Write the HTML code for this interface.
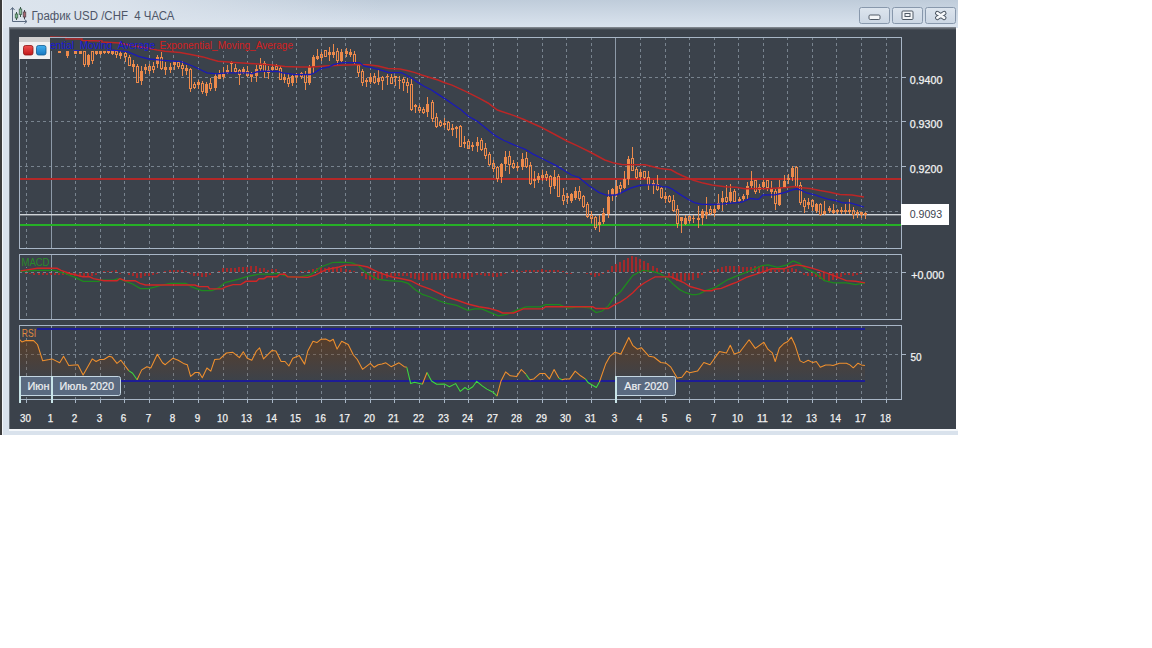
<!DOCTYPE html><html><head><meta charset="utf-8"><style>html,body{margin:0;padding:0;background:#fff;width:1152px;height:648px;overflow:hidden}svg{display:block}text{font-family:"Liberation Sans",sans-serif}</style></head><body>
<svg width="1152" height="648" viewBox="0 0 1152 648">
<defs>
<linearGradient id="tb" x1="0" y1="0" x2="0" y2="1"><stop offset="0" stop-color="#bfccda"/><stop offset="1" stop-color="#dbe4ef"/></linearGradient>
<linearGradient id="tbl" x1="0" y1="0" x2="1" y2="0"><stop offset="0" stop-color="#dce4ed" stop-opacity="1"/><stop offset="0.12" stop-color="#dce4ed" stop-opacity="0.9"/><stop offset="0.4" stop-color="#dce4ed" stop-opacity="0"/></linearGradient>
<linearGradient id="btn" x1="0" y1="0" x2="0" y2="1"><stop offset="0" stop-color="#dde5ee"/><stop offset="1" stop-color="#cbd6e3"/></linearGradient>
<linearGradient id="rsif" gradientUnits="userSpaceOnUse" x1="0" y1="336" x2="0" y2="382"><stop offset="0" stop-color="#6a3a12" stop-opacity="0.6"/><stop offset="1" stop-color="#7a3e10" stop-opacity="0"/></linearGradient>
<linearGradient id="red3d" x1="0" y1="0" x2="0" y2="1"><stop offset="0" stop-color="#f05050"/><stop offset="1" stop-color="#c01818"/></linearGradient>
<linearGradient id="blue3d" x1="0" y1="0" x2="0" y2="1"><stop offset="0" stop-color="#40b0f0"/><stop offset="1" stop-color="#1878c0"/></linearGradient>
<linearGradient id="shd" x1="0" y1="0" x2="0" y2="1"><stop offset="0" stop-color="#8c939a"/><stop offset="0.4" stop-color="#6a7078"/><stop offset="1" stop-color="#3b424b"/></linearGradient>
<clipPath id="cmain"><rect x="20" y="36" width="881" height="212"/></clipPath>
<clipPath id="cmacd"><rect x="20" y="255" width="881" height="64"/></clipPath>
<clipPath id="crsi"><rect x="20" y="326" width="881" height="73"/></clipPath>
</defs>
<rect x="0" y="0" width="958" height="435" fill="#d9e2ec"/>
<rect x="956" y="28" width="2" height="401" fill="#ffffff"/>
<rect x="0" y="0" width="958" height="28" fill="url(#tb)"/>
<rect x="0" y="0" width="958" height="28" fill="url(#tbl)"/>
<rect x="0" y="0" width="2" height="435" fill="#3c3c3c"/>
<rect x="2" y="0" width="1" height="435" fill="#f2f6fa"/>
<rect x="9" y="28" width="947" height="401" fill="#3b424b"/>
<rect x="9" y="27" width="947" height="3" fill="url(#shd)"/>
<rect x="9" y="28" width="1" height="401" fill="#6c737b"/>
<rect x="9" y="429" width="949" height="2" fill="#f4f7fa"/>
<g fill="none" stroke="#5a6a80" stroke-width="1">
<path d="M12.5 8 V21.5 H26.5"/><path d="M10.5 10 L12.5 7.5 L14.5 10"/><path d="M24.5 19.5 L27 21.5 L24.5 23.5"/>
</g>
<rect x="16" y="12" width="1" height="8" fill="#3a5a48"/><rect x="15.2" y="14" width="2.6" height="4" fill="#7ab48a" stroke="#3a5a48" stroke-width="0.7"/>
<rect x="20" y="7" width="1" height="10" fill="#3a5a48"/><rect x="19.2" y="9" width="2.6" height="5.5" fill="#8ac09a" stroke="#3a5a48" stroke-width="0.7"/>
<rect x="24" y="10" width="1" height="9" fill="#4a4048"/><rect x="23.2" y="12" width="2.6" height="5" fill="#a86870" stroke="#4a4048" stroke-width="0.7"/>
<text x="31.5" y="19.8" font-size="12" fill="#4e5668" textLength="143" lengthAdjust="spacingAndGlyphs">График USD /CHF &#160;4 ЧАСА</text>
<rect x="859.5" y="7.5" width="30" height="16" rx="2" fill="url(#btn)" stroke="#8898ac" stroke-width="1"/>
<rect x="892.5" y="7.5" width="30" height="16" rx="2" fill="url(#btn)" stroke="#8898ac" stroke-width="1"/>
<rect x="925.5" y="7.5" width="30" height="16" rx="2" fill="url(#btn)" stroke="#8898ac" stroke-width="1"/>
<rect x="869" y="15" width="11" height="4.5" rx="1.2" fill="#f4f6f8" stroke="#505a66" stroke-width="1"/>
<rect x="902" y="11" width="11" height="8.5" rx="1" fill="#f4f6f8" stroke="#505a66" stroke-width="1"/><rect x="905" y="13.5" width="5" height="3" fill="none" stroke="#505a66" stroke-width="1"/>
<path d="M937.3 13.2 L944.2 17.8 M944.2 13.2 L937.3 17.8" stroke="#4a5460" stroke-width="4.6" stroke-linecap="round"/><path d="M937.3 13.2 L944.2 17.8 M944.2 13.2 L937.3 17.8" stroke="#f6f8fa" stroke-width="2.6" stroke-linecap="round"/>
<g stroke="#78838e" stroke-width="1" stroke-dasharray="3 3" shape-rendering="crispEdges">
<line x1="26.5" y1="38" x2="26.5" y2="248" stroke-dashoffset="1"/><line x1="75.5" y1="38" x2="75.5" y2="248" stroke-dashoffset="1"/><line x1="100.5" y1="38" x2="100.5" y2="248" stroke-dashoffset="1"/><line x1="124.5" y1="38" x2="124.5" y2="248" stroke-dashoffset="1"/><line x1="149.5" y1="38" x2="149.5" y2="248" stroke-dashoffset="1"/><line x1="173.5" y1="38" x2="173.5" y2="248" stroke-dashoffset="1"/><line x1="198.5" y1="38" x2="198.5" y2="248" stroke-dashoffset="1"/><line x1="223.5" y1="38" x2="223.5" y2="248" stroke-dashoffset="1"/><line x1="247.5" y1="38" x2="247.5" y2="248" stroke-dashoffset="1"/><line x1="272.5" y1="38" x2="272.5" y2="248" stroke-dashoffset="1"/><line x1="296.5" y1="38" x2="296.5" y2="248" stroke-dashoffset="1"/><line x1="321.5" y1="38" x2="321.5" y2="248" stroke-dashoffset="1"/><line x1="345.5" y1="38" x2="345.5" y2="248" stroke-dashoffset="1"/><line x1="370.5" y1="38" x2="370.5" y2="248" stroke-dashoffset="1"/><line x1="394.5" y1="38" x2="394.5" y2="248" stroke-dashoffset="1"/><line x1="419.5" y1="38" x2="419.5" y2="248" stroke-dashoffset="1"/><line x1="444.5" y1="38" x2="444.5" y2="248" stroke-dashoffset="1"/><line x1="468.5" y1="38" x2="468.5" y2="248" stroke-dashoffset="1"/><line x1="493.5" y1="38" x2="493.5" y2="248" stroke-dashoffset="1"/><line x1="517.5" y1="38" x2="517.5" y2="248" stroke-dashoffset="1"/><line x1="542.5" y1="38" x2="542.5" y2="248" stroke-dashoffset="1"/><line x1="566.5" y1="38" x2="566.5" y2="248" stroke-dashoffset="1"/><line x1="591.5" y1="38" x2="591.5" y2="248" stroke-dashoffset="1"/><line x1="640.5" y1="38" x2="640.5" y2="248" stroke-dashoffset="1"/><line x1="665.5" y1="38" x2="665.5" y2="248" stroke-dashoffset="1"/><line x1="689.5" y1="38" x2="689.5" y2="248" stroke-dashoffset="1"/><line x1="714.5" y1="38" x2="714.5" y2="248" stroke-dashoffset="1"/><line x1="738.5" y1="38" x2="738.5" y2="248" stroke-dashoffset="1"/><line x1="763.5" y1="38" x2="763.5" y2="248" stroke-dashoffset="1"/><line x1="787.5" y1="38" x2="787.5" y2="248" stroke-dashoffset="1"/><line x1="812.5" y1="38" x2="812.5" y2="248" stroke-dashoffset="1"/><line x1="836.5" y1="38" x2="836.5" y2="248" stroke-dashoffset="1"/><line x1="861.5" y1="38" x2="861.5" y2="248" stroke-dashoffset="1"/><line x1="886.5" y1="38" x2="886.5" y2="248" stroke-dashoffset="1"/>
<line x1="20" y1="77.5" x2="901" y2="77.5" stroke-dashoffset="1"/>
<line x1="20" y1="121.5" x2="901" y2="121.5" stroke-dashoffset="1"/>
<line x1="20" y1="166.5" x2="901" y2="166.5" stroke-dashoffset="1"/>
<line x1="20" y1="211.5" x2="901" y2="211.5" stroke-dashoffset="1"/>
</g>
<g stroke="#8d9aa8" stroke-width="1" shape-rendering="crispEdges"><line x1="51.5" y1="37" x2="51.5" y2="248"/><line x1="615.5" y1="37" x2="615.5" y2="248"/></g>
<g stroke="#78838e" stroke-width="1" stroke-dasharray="3 3" shape-rendering="crispEdges">
<line x1="26.5" y1="255" x2="26.5" y2="319" stroke-dashoffset="2"/><line x1="75.5" y1="255" x2="75.5" y2="319" stroke-dashoffset="2"/><line x1="100.5" y1="255" x2="100.5" y2="319" stroke-dashoffset="2"/><line x1="124.5" y1="255" x2="124.5" y2="319" stroke-dashoffset="2"/><line x1="149.5" y1="255" x2="149.5" y2="319" stroke-dashoffset="2"/><line x1="173.5" y1="255" x2="173.5" y2="319" stroke-dashoffset="2"/><line x1="198.5" y1="255" x2="198.5" y2="319" stroke-dashoffset="2"/><line x1="223.5" y1="255" x2="223.5" y2="319" stroke-dashoffset="2"/><line x1="247.5" y1="255" x2="247.5" y2="319" stroke-dashoffset="2"/><line x1="272.5" y1="255" x2="272.5" y2="319" stroke-dashoffset="2"/><line x1="296.5" y1="255" x2="296.5" y2="319" stroke-dashoffset="2"/><line x1="321.5" y1="255" x2="321.5" y2="319" stroke-dashoffset="2"/><line x1="345.5" y1="255" x2="345.5" y2="319" stroke-dashoffset="2"/><line x1="370.5" y1="255" x2="370.5" y2="319" stroke-dashoffset="2"/><line x1="394.5" y1="255" x2="394.5" y2="319" stroke-dashoffset="2"/><line x1="419.5" y1="255" x2="419.5" y2="319" stroke-dashoffset="2"/><line x1="444.5" y1="255" x2="444.5" y2="319" stroke-dashoffset="2"/><line x1="468.5" y1="255" x2="468.5" y2="319" stroke-dashoffset="2"/><line x1="493.5" y1="255" x2="493.5" y2="319" stroke-dashoffset="2"/><line x1="517.5" y1="255" x2="517.5" y2="319" stroke-dashoffset="2"/><line x1="542.5" y1="255" x2="542.5" y2="319" stroke-dashoffset="2"/><line x1="566.5" y1="255" x2="566.5" y2="319" stroke-dashoffset="2"/><line x1="591.5" y1="255" x2="591.5" y2="319" stroke-dashoffset="2"/><line x1="640.5" y1="255" x2="640.5" y2="319" stroke-dashoffset="2"/><line x1="665.5" y1="255" x2="665.5" y2="319" stroke-dashoffset="2"/><line x1="689.5" y1="255" x2="689.5" y2="319" stroke-dashoffset="2"/><line x1="714.5" y1="255" x2="714.5" y2="319" stroke-dashoffset="2"/><line x1="738.5" y1="255" x2="738.5" y2="319" stroke-dashoffset="2"/><line x1="763.5" y1="255" x2="763.5" y2="319" stroke-dashoffset="2"/><line x1="787.5" y1="255" x2="787.5" y2="319" stroke-dashoffset="2"/><line x1="812.5" y1="255" x2="812.5" y2="319" stroke-dashoffset="2"/><line x1="836.5" y1="255" x2="836.5" y2="319" stroke-dashoffset="2"/><line x1="861.5" y1="255" x2="861.5" y2="319" stroke-dashoffset="2"/><line x1="886.5" y1="255" x2="886.5" y2="319" stroke-dashoffset="2"/>
<line x1="20" y1="272.5" x2="901" y2="272.5" stroke-dashoffset="1"/>
</g>
<g stroke="#8d9aa8" stroke-width="1" shape-rendering="crispEdges"><line x1="51.5" y1="254" x2="51.5" y2="319"/><line x1="615.5" y1="254" x2="615.5" y2="319"/></g>
<g stroke="#78838e" stroke-width="1" stroke-dasharray="3 3" shape-rendering="crispEdges">
<line x1="26.5" y1="326" x2="26.5" y2="399" stroke-dashoffset="1"/><line x1="75.5" y1="326" x2="75.5" y2="399" stroke-dashoffset="1"/><line x1="100.5" y1="326" x2="100.5" y2="399" stroke-dashoffset="1"/><line x1="124.5" y1="326" x2="124.5" y2="399" stroke-dashoffset="1"/><line x1="149.5" y1="326" x2="149.5" y2="399" stroke-dashoffset="1"/><line x1="173.5" y1="326" x2="173.5" y2="399" stroke-dashoffset="1"/><line x1="198.5" y1="326" x2="198.5" y2="399" stroke-dashoffset="1"/><line x1="223.5" y1="326" x2="223.5" y2="399" stroke-dashoffset="1"/><line x1="247.5" y1="326" x2="247.5" y2="399" stroke-dashoffset="1"/><line x1="272.5" y1="326" x2="272.5" y2="399" stroke-dashoffset="1"/><line x1="296.5" y1="326" x2="296.5" y2="399" stroke-dashoffset="1"/><line x1="321.5" y1="326" x2="321.5" y2="399" stroke-dashoffset="1"/><line x1="345.5" y1="326" x2="345.5" y2="399" stroke-dashoffset="1"/><line x1="370.5" y1="326" x2="370.5" y2="399" stroke-dashoffset="1"/><line x1="394.5" y1="326" x2="394.5" y2="399" stroke-dashoffset="1"/><line x1="419.5" y1="326" x2="419.5" y2="399" stroke-dashoffset="1"/><line x1="444.5" y1="326" x2="444.5" y2="399" stroke-dashoffset="1"/><line x1="468.5" y1="326" x2="468.5" y2="399" stroke-dashoffset="1"/><line x1="493.5" y1="326" x2="493.5" y2="399" stroke-dashoffset="1"/><line x1="517.5" y1="326" x2="517.5" y2="399" stroke-dashoffset="1"/><line x1="542.5" y1="326" x2="542.5" y2="399" stroke-dashoffset="1"/><line x1="566.5" y1="326" x2="566.5" y2="399" stroke-dashoffset="1"/><line x1="591.5" y1="326" x2="591.5" y2="399" stroke-dashoffset="1"/><line x1="640.5" y1="326" x2="640.5" y2="399" stroke-dashoffset="1"/><line x1="665.5" y1="326" x2="665.5" y2="399" stroke-dashoffset="1"/><line x1="689.5" y1="326" x2="689.5" y2="399" stroke-dashoffset="1"/><line x1="714.5" y1="326" x2="714.5" y2="399" stroke-dashoffset="1"/><line x1="738.5" y1="326" x2="738.5" y2="399" stroke-dashoffset="1"/><line x1="763.5" y1="326" x2="763.5" y2="399" stroke-dashoffset="1"/><line x1="787.5" y1="326" x2="787.5" y2="399" stroke-dashoffset="1"/><line x1="812.5" y1="326" x2="812.5" y2="399" stroke-dashoffset="1"/><line x1="836.5" y1="326" x2="836.5" y2="399" stroke-dashoffset="1"/><line x1="861.5" y1="326" x2="861.5" y2="399" stroke-dashoffset="1"/><line x1="886.5" y1="326" x2="886.5" y2="399" stroke-dashoffset="1"/>
<line x1="20" y1="354.5" x2="901" y2="354.5" stroke-dashoffset="1"/>
</g>
<g stroke="#8d9aa8" stroke-width="1" shape-rendering="crispEdges"><line x1="51.5" y1="325" x2="51.5" y2="399"/><line x1="615.5" y1="325" x2="615.5" y2="399"/></g>
<g stroke="#a8b6c6" stroke-width="1" shape-rendering="crispEdges">
<line x1="901" y1="77.5" x2="906" y2="77.5"/>
<line x1="901" y1="121.5" x2="906" y2="121.5"/>
<line x1="901" y1="166.5" x2="906" y2="166.5"/>
<line x1="901" y1="272.5" x2="906" y2="272.5"/><line x1="901" y1="354.5" x2="906" y2="354.5"/>
</g>
<g font-size="11" fill="#f2f2f2" stroke="#f2f2f2" stroke-width="0.25" lengthAdjust="spacingAndGlyphs">
<text x="909.7" y="83.8" textLength="32.7" lengthAdjust="spacingAndGlyphs">0.9400</text>
<text x="909.7" y="127.8" textLength="32.7" lengthAdjust="spacingAndGlyphs">0.9300</text>
<text x="909.7" y="172.8" textLength="32.7" lengthAdjust="spacingAndGlyphs">0.9200</text>
<text x="911.2" y="279" textLength="33" lengthAdjust="spacingAndGlyphs">+0.000</text><text x="910.4" y="361" textLength="11.1" lengthAdjust="spacingAndGlyphs">50</text>
</g>
<g clip-path="url(#cmain)">
<rect x="20" y="178" width="881" height="2" fill="#b42828"/>
<rect x="20" y="224" width="881" height="2" fill="#26b026"/>
<rect x="20" y="214" width="881" height="1.4" fill="#d0d4d8"/>
<g fill="#ec8a4c" shape-rendering="crispEdges">
<rect x="58" y="51" width="3" height="2"/>
<rect x="67" y="55" width="1" height="3"/>
<rect x="66" y="51" width="3" height="5"/>
<rect x="74" y="51" width="3" height="3"/>
<rect x="79" y="51" width="3" height="3"/>
<rect x="84" y="64" width="1" height="3"/>
<path d="M83 51h3v14h-3z M84 52h1v12h-1z" fill-rule="evenodd"/>
<rect x="88" y="54" width="1" height="1"/>
<rect x="88" y="64" width="1" height="3"/>
<rect x="87" y="55" width="3" height="10"/>
<rect x="92" y="60" width="1" height="4"/>
<path d="M91 51h3v10h-3z M92 52h1v8h-1z" fill-rule="evenodd"/>
<rect x="96" y="53" width="1" height="2"/>
<rect x="95" y="51" width="3" height="3"/>
<rect x="100" y="53" width="1" height="2"/>
<rect x="99" y="51" width="3" height="3"/>
<rect x="104" y="52" width="1" height="2"/>
<rect x="103" y="51" width="3" height="2"/>
<rect x="108" y="52" width="1" height="2"/>
<rect x="107" y="51" width="3" height="2"/>
<rect x="112" y="53" width="1" height="2"/>
<rect x="111" y="51" width="3" height="3"/>
<rect x="116" y="54" width="1" height="4"/>
<path d="M115 51h3v4h-3z M116 52h1v2h-1z" fill-rule="evenodd"/>
<rect x="120" y="51" width="1" height="2"/>
<rect x="120" y="55" width="1" height="4"/>
<rect x="119" y="53" width="3" height="3"/>
<rect x="125" y="52" width="1" height="1"/>
<rect x="125" y="56" width="1" height="6"/>
<path d="M124 53h3v4h-3z M125 54h1v2h-1z" fill-rule="evenodd"/>
<rect x="129" y="55" width="1" height="2"/>
<path d="M128 57h3v9h-3z M129 58h1v7h-1z" fill-rule="evenodd"/>
<rect x="133" y="60" width="1" height="4"/>
<rect x="133" y="66" width="1" height="6"/>
<rect x="132" y="64" width="3" height="3"/>
<rect x="137" y="64" width="1" height="2"/>
<path d="M136 66h3v17h-3z M137 67h1v15h-1z" fill-rule="evenodd"/>
<rect x="141" y="66" width="1" height="5"/>
<rect x="141" y="80" width="1" height="5"/>
<rect x="140" y="71" width="3" height="10"/>
<rect x="145" y="64" width="1" height="3"/>
<rect x="145" y="69" width="1" height="5"/>
<rect x="144" y="67" width="3" height="3"/>
<rect x="149" y="64" width="1" height="2"/>
<rect x="149" y="70" width="1" height="4"/>
<path d="M148 66h3v5h-3z M149 67h1v3h-1z" fill-rule="evenodd"/>
<rect x="153" y="62" width="1" height="4"/>
<rect x="153" y="69" width="1" height="4"/>
<path d="M152 66h3v4h-3z M153 67h1v2h-1z" fill-rule="evenodd"/>
<rect x="157" y="55" width="1" height="2"/>
<rect x="157" y="63" width="1" height="5"/>
<rect x="156" y="57" width="3" height="7"/>
<rect x="161" y="52" width="1" height="5"/>
<rect x="161" y="68" width="1" height="2"/>
<path d="M160 57h3v12h-3z M161 58h1v10h-1z" fill-rule="evenodd"/>
<rect x="165" y="62" width="1" height="5"/>
<rect x="165" y="69" width="1" height="6"/>
<rect x="164" y="67" width="3" height="3"/>
<rect x="170" y="63" width="1" height="4"/>
<rect x="170" y="69" width="1" height="4"/>
<rect x="169" y="67" width="3" height="3"/>
<rect x="174" y="64" width="1" height="6"/>
<rect x="173" y="62" width="3" height="3"/>
<rect x="178" y="66" width="1" height="3"/>
<path d="M177 62h3v5h-3z M178 63h1v3h-1z" fill-rule="evenodd"/>
<rect x="182" y="61" width="1" height="4"/>
<rect x="182" y="68" width="1" height="8"/>
<path d="M181 65h3v4h-3z M182 66h1v2h-1z" fill-rule="evenodd"/>
<rect x="186" y="65" width="1" height="3"/>
<rect x="186" y="70" width="1" height="5"/>
<rect x="185" y="68" width="3" height="3"/>
<rect x="190" y="68" width="1" height="1"/>
<rect x="190" y="88" width="1" height="4"/>
<path d="M189 69h3v20h-3z M190 70h1v18h-1z" fill-rule="evenodd"/>
<rect x="194" y="82" width="1" height="2"/>
<rect x="194" y="87" width="1" height="2"/>
<path d="M193 84h3v4h-3z M194 85h1v2h-1z" fill-rule="evenodd"/>
<rect x="198" y="80" width="1" height="2"/>
<rect x="198" y="84" width="1" height="5"/>
<rect x="197" y="82" width="3" height="3"/>
<rect x="202" y="81" width="1" height="2"/>
<rect x="202" y="91" width="1" height="3"/>
<path d="M201 83h3v9h-3z M202 84h1v7h-1z" fill-rule="evenodd"/>
<rect x="206" y="82" width="1" height="2"/>
<rect x="206" y="92" width="1" height="4"/>
<rect x="205" y="84" width="3" height="9"/>
<rect x="210" y="78" width="1" height="5"/>
<rect x="210" y="88" width="1" height="3"/>
<path d="M209 83h3v6h-3z M210 84h1v4h-1z" fill-rule="evenodd"/>
<rect x="215" y="74" width="1" height="2"/>
<rect x="215" y="87" width="1" height="4"/>
<rect x="214" y="76" width="3" height="12"/>
<rect x="219" y="70" width="1" height="4"/>
<rect x="218" y="74" width="3" height="5"/>
<rect x="223" y="67" width="1" height="7"/>
<rect x="223" y="76" width="1" height="3"/>
<rect x="222" y="74" width="3" height="3"/>
<rect x="227" y="65" width="1" height="5"/>
<rect x="227" y="72" width="1" height="2"/>
<rect x="226" y="70" width="3" height="3"/>
<rect x="231" y="61" width="1" height="1"/>
<rect x="231" y="63" width="1" height="9"/>
<rect x="230" y="62" width="3" height="2"/>
<rect x="235" y="64" width="1" height="4"/>
<rect x="235" y="71" width="1" height="2"/>
<path d="M234 68h3v4h-3z M235 69h1v2h-1z" fill-rule="evenodd"/>
<rect x="239" y="69" width="1" height="1"/>
<rect x="239" y="74" width="1" height="11"/>
<path d="M238 70h3v5h-3z M239 71h1v3h-1z" fill-rule="evenodd"/>
<rect x="243" y="67" width="1" height="2"/>
<rect x="243" y="72" width="1" height="2"/>
<rect x="242" y="69" width="3" height="4"/>
<rect x="247" y="66" width="1" height="5"/>
<rect x="247" y="75" width="1" height="2"/>
<path d="M246 71h3v5h-3z M247 72h1v3h-1z" fill-rule="evenodd"/>
<rect x="251" y="72" width="1" height="2"/>
<rect x="251" y="76" width="1" height="6"/>
<rect x="250" y="74" width="3" height="3"/>
<rect x="256" y="65" width="1" height="4"/>
<rect x="256" y="75" width="1" height="7"/>
<rect x="255" y="69" width="3" height="7"/>
<rect x="260" y="58" width="1" height="7"/>
<rect x="260" y="68" width="1" height="3"/>
<path d="M259 65h3v4h-3z M260 66h1v2h-1z" fill-rule="evenodd"/>
<rect x="264" y="61" width="1" height="2"/>
<rect x="264" y="71" width="1" height="7"/>
<path d="M263 63h3v9h-3z M264 64h1v7h-1z" fill-rule="evenodd"/>
<rect x="268" y="66" width="1" height="4"/>
<rect x="268" y="72" width="1" height="7"/>
<rect x="267" y="70" width="3" height="3"/>
<rect x="272" y="64" width="1" height="3"/>
<rect x="272" y="69" width="1" height="2"/>
<rect x="271" y="67" width="3" height="3"/>
<rect x="276" y="64" width="1" height="2"/>
<path d="M275 66h3v4h-3z M276 67h1v2h-1z" fill-rule="evenodd"/>
<rect x="280" y="66" width="1" height="2"/>
<path d="M279 68h3v12h-3z M280 69h1v10h-1z" fill-rule="evenodd"/>
<rect x="284" y="73" width="1" height="4"/>
<rect x="284" y="79" width="1" height="4"/>
<rect x="283" y="77" width="3" height="3"/>
<rect x="288" y="74" width="1" height="4"/>
<rect x="288" y="83" width="1" height="4"/>
<path d="M287 78h3v6h-3z M288 79h1v4h-1z" fill-rule="evenodd"/>
<rect x="292" y="74" width="1" height="2"/>
<rect x="292" y="82" width="1" height="4"/>
<rect x="291" y="76" width="3" height="7"/>
<rect x="296" y="73" width="1" height="2"/>
<rect x="296" y="76" width="1" height="7"/>
<rect x="295" y="75" width="3" height="2"/>
<rect x="301" y="72" width="1" height="1"/>
<rect x="301" y="76" width="1" height="3"/>
<path d="M300 73h3v4h-3z M301 74h1v2h-1z" fill-rule="evenodd"/>
<rect x="305" y="71" width="1" height="3"/>
<rect x="305" y="82" width="1" height="8"/>
<path d="M304 74h3v9h-3z M305 75h1v7h-1z" fill-rule="evenodd"/>
<rect x="309" y="65" width="1" height="2"/>
<rect x="309" y="82" width="1" height="3"/>
<rect x="308" y="67" width="3" height="16"/>
<rect x="313" y="55" width="1" height="2"/>
<rect x="313" y="66" width="1" height="7"/>
<rect x="312" y="57" width="3" height="10"/>
<rect x="317" y="49" width="1" height="7"/>
<rect x="317" y="58" width="1" height="2"/>
<rect x="316" y="56" width="3" height="3"/>
<rect x="321" y="52" width="1" height="2"/>
<rect x="321" y="57" width="1" height="4"/>
<path d="M320 54h3v4h-3z M321 55h1v2h-1z" fill-rule="evenodd"/>
<path d="M324 50h3v7h-3z M325 51h1v5h-1z" fill-rule="evenodd"/>
<rect x="329" y="47" width="1" height="5"/>
<rect x="329" y="54" width="1" height="7"/>
<rect x="328" y="52" width="3" height="3"/>
<rect x="333" y="44" width="1" height="8"/>
<rect x="333" y="54" width="1" height="4"/>
<rect x="332" y="52" width="3" height="3"/>
<rect x="337" y="48" width="1" height="3"/>
<rect x="337" y="60" width="1" height="6"/>
<path d="M336 51h3v10h-3z M337 52h1v8h-1z" fill-rule="evenodd"/>
<rect x="341" y="49" width="1" height="3"/>
<rect x="341" y="60" width="1" height="3"/>
<rect x="340" y="52" width="3" height="9"/>
<rect x="346" y="48" width="1" height="3"/>
<rect x="346" y="53" width="1" height="4"/>
<rect x="345" y="51" width="3" height="3"/>
<rect x="350" y="49" width="1" height="3"/>
<rect x="350" y="54" width="1" height="3"/>
<rect x="349" y="52" width="3" height="3"/>
<rect x="354" y="51" width="1" height="3"/>
<rect x="354" y="62" width="1" height="2"/>
<path d="M353 54h3v9h-3z M354 55h1v7h-1z" fill-rule="evenodd"/>
<rect x="358" y="64" width="1" height="1"/>
<rect x="358" y="72" width="1" height="5"/>
<path d="M357 65h3v8h-3z M358 66h1v6h-1z" fill-rule="evenodd"/>
<rect x="362" y="69" width="1" height="2"/>
<rect x="362" y="82" width="1" height="4"/>
<path d="M361 71h3v12h-3z M362 72h1v10h-1z" fill-rule="evenodd"/>
<rect x="366" y="78" width="1" height="2"/>
<rect x="366" y="81" width="1" height="6"/>
<rect x="365" y="80" width="3" height="2"/>
<rect x="370" y="73" width="1" height="4"/>
<rect x="370" y="81" width="1" height="3"/>
<rect x="369" y="77" width="3" height="5"/>
<rect x="374" y="73" width="1" height="3"/>
<rect x="374" y="82" width="1" height="2"/>
<path d="M373 76h3v7h-3z M374 77h1v5h-1z" fill-rule="evenodd"/>
<rect x="378" y="70" width="1" height="8"/>
<rect x="378" y="81" width="1" height="4"/>
<rect x="377" y="78" width="3" height="4"/>
<rect x="382" y="76" width="1" height="1"/>
<rect x="382" y="80" width="1" height="10"/>
<path d="M381 77h3v4h-3z M382 78h1v2h-1z" fill-rule="evenodd"/>
<rect x="387" y="74" width="1" height="2"/>
<rect x="387" y="76" width="1" height="9"/>
<rect x="386" y="76" width="3" height="1"/>
<rect x="391" y="74" width="1" height="3"/>
<path d="M390 77h3v7h-3z M391 78h1v5h-1z" fill-rule="evenodd"/>
<rect x="395" y="77" width="1" height="9"/>
<rect x="394" y="76" width="3" height="2"/>
<rect x="399" y="76" width="1" height="4"/>
<rect x="399" y="80" width="1" height="9"/>
<rect x="398" y="80" width="3" height="1"/>
<rect x="403" y="77" width="1" height="2"/>
<rect x="403" y="82" width="1" height="9"/>
<path d="M402 79h3v4h-3z M403 80h1v2h-1z" fill-rule="evenodd"/>
<rect x="407" y="78" width="1" height="4"/>
<rect x="407" y="85" width="1" height="8"/>
<path d="M406 82h3v4h-3z M407 83h1v2h-1z" fill-rule="evenodd"/>
<rect x="411" y="79" width="1" height="5"/>
<rect x="411" y="109" width="1" height="2"/>
<path d="M410 84h3v26h-3z M411 85h1v24h-1z" fill-rule="evenodd"/>
<rect x="415" y="104" width="1" height="1"/>
<rect x="415" y="106" width="1" height="7"/>
<rect x="414" y="105" width="3" height="2"/>
<rect x="419" y="105" width="1" height="2"/>
<rect x="419" y="110" width="1" height="3"/>
<path d="M418 107h3v4h-3z M419 108h1v2h-1z" fill-rule="evenodd"/>
<rect x="423" y="107" width="1" height="2"/>
<rect x="423" y="112" width="1" height="2"/>
<path d="M422 109h3v4h-3z M423 110h1v2h-1z" fill-rule="evenodd"/>
<rect x="427" y="97" width="1" height="7"/>
<rect x="427" y="111" width="1" height="6"/>
<rect x="426" y="104" width="3" height="8"/>
<rect x="432" y="100" width="1" height="2"/>
<rect x="432" y="118" width="1" height="4"/>
<path d="M431 102h3v17h-3z M432 103h1v15h-1z" fill-rule="evenodd"/>
<rect x="436" y="113" width="1" height="4"/>
<rect x="436" y="126" width="1" height="2"/>
<path d="M435 117h3v10h-3z M436 118h1v8h-1z" fill-rule="evenodd"/>
<rect x="440" y="120" width="1" height="2"/>
<rect x="440" y="125" width="1" height="2"/>
<path d="M439 122h3v4h-3z M440 123h1v2h-1z" fill-rule="evenodd"/>
<rect x="444" y="118" width="1" height="5"/>
<rect x="444" y="124" width="1" height="4"/>
<rect x="443" y="123" width="3" height="2"/>
<rect x="448" y="121" width="1" height="1"/>
<rect x="448" y="129" width="1" height="2"/>
<path d="M447 122h3v8h-3z M448 123h1v6h-1z" fill-rule="evenodd"/>
<rect x="452" y="124" width="1" height="4"/>
<rect x="452" y="129" width="1" height="7"/>
<rect x="451" y="128" width="3" height="2"/>
<rect x="456" y="126" width="1" height="1"/>
<rect x="456" y="128" width="1" height="10"/>
<rect x="455" y="127" width="3" height="2"/>
<rect x="460" y="125" width="1" height="1"/>
<path d="M459 126h3v21h-3z M460 127h1v19h-1z" fill-rule="evenodd"/>
<rect x="464" y="136" width="1" height="6"/>
<rect x="464" y="143" width="1" height="5"/>
<rect x="463" y="142" width="3" height="2"/>
<rect x="468" y="139" width="1" height="2"/>
<path d="M467 141h3v8h-3z M468 142h1v6h-1z" fill-rule="evenodd"/>
<rect x="472" y="142" width="1" height="3"/>
<rect x="472" y="146" width="1" height="5"/>
<rect x="471" y="145" width="3" height="2"/>
<rect x="477" y="137" width="1" height="5"/>
<rect x="477" y="145" width="1" height="7"/>
<rect x="476" y="142" width="3" height="4"/>
<rect x="481" y="138" width="1" height="2"/>
<rect x="481" y="149" width="1" height="2"/>
<path d="M480 140h3v10h-3z M481 141h1v8h-1z" fill-rule="evenodd"/>
<rect x="485" y="143" width="1" height="5"/>
<rect x="485" y="155" width="1" height="4"/>
<path d="M484 148h3v8h-3z M485 149h1v6h-1z" fill-rule="evenodd"/>
<rect x="489" y="152" width="1" height="2"/>
<rect x="489" y="164" width="1" height="2"/>
<path d="M488 154h3v11h-3z M489 155h1v9h-1z" fill-rule="evenodd"/>
<rect x="493" y="160" width="1" height="3"/>
<rect x="493" y="168" width="1" height="4"/>
<path d="M492 163h3v6h-3z M493 164h1v4h-1z" fill-rule="evenodd"/>
<rect x="497" y="166" width="1" height="1"/>
<rect x="497" y="178" width="1" height="4"/>
<path d="M496 167h3v12h-3z M497 168h1v10h-1z" fill-rule="evenodd"/>
<rect x="501" y="163" width="1" height="1"/>
<rect x="501" y="176" width="1" height="7"/>
<rect x="500" y="164" width="3" height="13"/>
<rect x="505" y="151" width="1" height="6"/>
<rect x="505" y="163" width="1" height="8"/>
<rect x="504" y="157" width="3" height="7"/>
<rect x="509" y="151" width="1" height="5"/>
<rect x="509" y="164" width="1" height="10"/>
<path d="M508 156h3v9h-3z M509 157h1v7h-1z" fill-rule="evenodd"/>
<rect x="513" y="160" width="1" height="3"/>
<rect x="513" y="167" width="1" height="2"/>
<path d="M512 163h3v5h-3z M513 164h1v3h-1z" fill-rule="evenodd"/>
<rect x="517" y="162" width="1" height="4"/>
<rect x="517" y="167" width="1" height="4"/>
<rect x="516" y="166" width="3" height="2"/>
<rect x="522" y="153" width="1" height="6"/>
<rect x="522" y="166" width="1" height="4"/>
<rect x="521" y="159" width="3" height="8"/>
<rect x="526" y="152" width="1" height="6"/>
<rect x="526" y="166" width="1" height="2"/>
<path d="M525 158h3v9h-3z M526 159h1v7h-1z" fill-rule="evenodd"/>
<rect x="530" y="162" width="1" height="3"/>
<rect x="530" y="183" width="1" height="2"/>
<path d="M529 165h3v19h-3z M530 166h1v17h-1z" fill-rule="evenodd"/>
<rect x="534" y="171" width="1" height="8"/>
<rect x="534" y="180" width="1" height="8"/>
<rect x="533" y="179" width="3" height="2"/>
<rect x="538" y="173" width="1" height="3"/>
<rect x="538" y="179" width="1" height="4"/>
<rect x="537" y="176" width="3" height="4"/>
<rect x="542" y="170" width="1" height="5"/>
<rect x="542" y="177" width="1" height="4"/>
<rect x="541" y="175" width="3" height="3"/>
<rect x="546" y="171" width="1" height="3"/>
<rect x="546" y="177" width="1" height="4"/>
<path d="M545 174h3v4h-3z M546 175h1v2h-1z" fill-rule="evenodd"/>
<rect x="550" y="175" width="1" height="1"/>
<rect x="550" y="186" width="1" height="8"/>
<path d="M549 176h3v11h-3z M550 177h1v9h-1z" fill-rule="evenodd"/>
<rect x="554" y="170" width="1" height="7"/>
<rect x="554" y="185" width="1" height="4"/>
<rect x="553" y="177" width="3" height="9"/>
<rect x="558" y="174" width="1" height="2"/>
<path d="M557 176h3v21h-3z M558 177h1v19h-1z" fill-rule="evenodd"/>
<rect x="563" y="188" width="1" height="7"/>
<rect x="563" y="200" width="1" height="5"/>
<path d="M562 195h3v6h-3z M563 196h1v4h-1z" fill-rule="evenodd"/>
<rect x="567" y="193" width="1" height="3"/>
<rect x="567" y="197" width="1" height="7"/>
<rect x="566" y="196" width="3" height="2"/>
<rect x="571" y="193" width="1" height="1"/>
<rect x="571" y="200" width="1" height="3"/>
<rect x="570" y="194" width="3" height="7"/>
<rect x="575" y="187" width="1" height="4"/>
<rect x="575" y="197" width="1" height="3"/>
<rect x="574" y="191" width="3" height="7"/>
<rect x="579" y="186" width="1" height="5"/>
<rect x="579" y="198" width="1" height="3"/>
<path d="M578 191h3v8h-3z M579 192h1v6h-1z" fill-rule="evenodd"/>
<rect x="583" y="195" width="1" height="1"/>
<rect x="583" y="206" width="1" height="2"/>
<path d="M582 196h3v11h-3z M583 197h1v9h-1z" fill-rule="evenodd"/>
<rect x="587" y="202" width="1" height="2"/>
<rect x="587" y="216" width="1" height="2"/>
<path d="M586 204h3v13h-3z M587 205h1v11h-1z" fill-rule="evenodd"/>
<rect x="591" y="211" width="1" height="4"/>
<rect x="591" y="218" width="1" height="5"/>
<path d="M590 215h3v4h-3z M591 216h1v2h-1z" fill-rule="evenodd"/>
<rect x="595" y="216" width="1" height="1"/>
<rect x="595" y="227" width="1" height="3"/>
<path d="M594 217h3v11h-3z M595 218h1v9h-1z" fill-rule="evenodd"/>
<rect x="599" y="215" width="1" height="7"/>
<rect x="599" y="224" width="1" height="8"/>
<rect x="598" y="222" width="3" height="3"/>
<rect x="603" y="208" width="1" height="5"/>
<rect x="603" y="221" width="1" height="3"/>
<rect x="602" y="213" width="3" height="9"/>
<rect x="608" y="190" width="1" height="7"/>
<rect x="608" y="213" width="1" height="5"/>
<rect x="607" y="197" width="3" height="17"/>
<rect x="612" y="188" width="1" height="1"/>
<rect x="612" y="194" width="1" height="7"/>
<rect x="611" y="189" width="3" height="6"/>
<rect x="616" y="180" width="1" height="6"/>
<rect x="616" y="194" width="1" height="3"/>
<rect x="615" y="186" width="3" height="9"/>
<rect x="620" y="182" width="1" height="3"/>
<rect x="620" y="188" width="1" height="6"/>
<path d="M619 185h3v4h-3z M620 186h1v2h-1z" fill-rule="evenodd"/>
<rect x="624" y="171" width="1" height="8"/>
<rect x="624" y="187" width="1" height="2"/>
<rect x="623" y="179" width="3" height="9"/>
<rect x="628" y="156" width="1" height="3"/>
<rect x="628" y="178" width="1" height="7"/>
<rect x="627" y="159" width="3" height="20"/>
<rect x="632" y="147" width="1" height="11"/>
<path d="M631 158h3v13h-3z M632 159h1v11h-1z" fill-rule="evenodd"/>
<rect x="636" y="167" width="1" height="2"/>
<rect x="636" y="177" width="1" height="2"/>
<path d="M635 169h3v9h-3z M636 170h1v7h-1z" fill-rule="evenodd"/>
<rect x="640" y="169" width="1" height="3"/>
<rect x="640" y="176" width="1" height="4"/>
<rect x="639" y="172" width="3" height="5"/>
<rect x="644" y="177" width="1" height="2"/>
<path d="M643 171h3v7h-3z M644 172h1v5h-1z" fill-rule="evenodd"/>
<rect x="648" y="171" width="1" height="6"/>
<rect x="648" y="184" width="1" height="6"/>
<path d="M647 177h3v8h-3z M648 178h1v6h-1z" fill-rule="evenodd"/>
<rect x="653" y="180" width="1" height="3"/>
<rect x="653" y="184" width="1" height="10"/>
<rect x="652" y="183" width="3" height="2"/>
<rect x="657" y="175" width="1" height="9"/>
<rect x="657" y="189" width="1" height="2"/>
<path d="M656 184h3v6h-3z M657 185h1v4h-1z" fill-rule="evenodd"/>
<rect x="661" y="187" width="1" height="1"/>
<rect x="661" y="197" width="1" height="2"/>
<path d="M660 188h3v10h-3z M661 189h1v8h-1z" fill-rule="evenodd"/>
<rect x="665" y="192" width="1" height="4"/>
<rect x="665" y="198" width="1" height="5"/>
<rect x="664" y="196" width="3" height="3"/>
<rect x="669" y="195" width="1" height="1"/>
<rect x="669" y="201" width="1" height="2"/>
<path d="M668 196h3v6h-3z M669 197h1v4h-1z" fill-rule="evenodd"/>
<rect x="673" y="195" width="1" height="5"/>
<rect x="673" y="210" width="1" height="2"/>
<path d="M672 200h3v11h-3z M673 201h1v9h-1z" fill-rule="evenodd"/>
<rect x="677" y="205" width="1" height="4"/>
<rect x="677" y="223" width="1" height="5"/>
<path d="M676 209h3v15h-3z M677 210h1v13h-1z" fill-rule="evenodd"/>
<rect x="681" y="220" width="1" height="13"/>
<rect x="680" y="217" width="3" height="4"/>
<rect x="685" y="215" width="1" height="3"/>
<rect x="685" y="223" width="1" height="2"/>
<rect x="684" y="218" width="3" height="6"/>
<rect x="689" y="215" width="1" height="1"/>
<rect x="689" y="220" width="1" height="3"/>
<path d="M688 216h3v5h-3z M689 217h1v3h-1z" fill-rule="evenodd"/>
<rect x="693" y="215" width="1" height="3"/>
<rect x="693" y="218" width="1" height="5"/>
<rect x="692" y="218" width="3" height="1"/>
<rect x="698" y="206" width="1" height="12"/>
<rect x="698" y="219" width="1" height="9"/>
<rect x="697" y="218" width="3" height="2"/>
<rect x="702" y="209" width="1" height="2"/>
<rect x="702" y="217" width="1" height="8"/>
<rect x="701" y="211" width="3" height="7"/>
<rect x="706" y="197" width="1" height="15"/>
<rect x="706" y="214" width="1" height="5"/>
<rect x="705" y="212" width="3" height="3"/>
<rect x="710" y="206" width="1" height="3"/>
<rect x="710" y="213" width="1" height="2"/>
<path d="M709 209h3v5h-3z M710 210h1v3h-1z" fill-rule="evenodd"/>
<rect x="714" y="206" width="1" height="3"/>
<rect x="714" y="212" width="1" height="5"/>
<rect x="713" y="209" width="3" height="4"/>
<rect x="718" y="194" width="1" height="9"/>
<rect x="718" y="208" width="1" height="2"/>
<rect x="717" y="203" width="3" height="6"/>
<rect x="722" y="191" width="1" height="7"/>
<rect x="722" y="201" width="1" height="10"/>
<rect x="721" y="198" width="3" height="4"/>
<rect x="726" y="185" width="1" height="12"/>
<rect x="726" y="201" width="1" height="4"/>
<path d="M725 197h3v5h-3z M726 198h1v3h-1z" fill-rule="evenodd"/>
<rect x="730" y="184" width="1" height="8"/>
<rect x="730" y="200" width="1" height="3"/>
<rect x="729" y="192" width="3" height="9"/>
<rect x="734" y="189" width="1" height="2"/>
<path d="M733 191h3v11h-3z M734 192h1v9h-1z" fill-rule="evenodd"/>
<rect x="739" y="197" width="1" height="2"/>
<rect x="739" y="200" width="1" height="3"/>
<rect x="738" y="199" width="3" height="2"/>
<rect x="743" y="194" width="1" height="2"/>
<rect x="743" y="198" width="1" height="3"/>
<rect x="742" y="196" width="3" height="3"/>
<rect x="747" y="182" width="1" height="4"/>
<rect x="747" y="194" width="1" height="6"/>
<rect x="746" y="186" width="3" height="9"/>
<rect x="751" y="171" width="1" height="10"/>
<rect x="751" y="185" width="1" height="3"/>
<rect x="750" y="181" width="3" height="5"/>
<rect x="755" y="191" width="1" height="3"/>
<path d="M754 180h3v12h-3z M755 181h1v10h-1z" fill-rule="evenodd"/>
<rect x="759" y="184" width="1" height="3"/>
<rect x="759" y="189" width="1" height="4"/>
<rect x="758" y="187" width="3" height="3"/>
<rect x="763" y="180" width="1" height="2"/>
<rect x="763" y="186" width="1" height="2"/>
<rect x="762" y="182" width="3" height="5"/>
<rect x="767" y="187" width="1" height="4"/>
<path d="M766 180h3v8h-3z M767 181h1v6h-1z" fill-rule="evenodd"/>
<rect x="771" y="181" width="1" height="8"/>
<rect x="771" y="191" width="1" height="7"/>
<rect x="770" y="189" width="3" height="3"/>
<rect x="775" y="189" width="1" height="2"/>
<rect x="775" y="203" width="1" height="7"/>
<path d="M774 191h3v13h-3z M775 192h1v11h-1z" fill-rule="evenodd"/>
<rect x="779" y="180" width="1" height="7"/>
<rect x="779" y="204" width="1" height="2"/>
<rect x="778" y="187" width="3" height="18"/>
<rect x="784" y="175" width="1" height="6"/>
<rect x="784" y="186" width="1" height="2"/>
<rect x="783" y="181" width="3" height="6"/>
<rect x="788" y="174" width="1" height="4"/>
<rect x="788" y="179" width="1" height="5"/>
<rect x="787" y="178" width="3" height="2"/>
<rect x="792" y="166" width="1" height="2"/>
<rect x="792" y="176" width="1" height="5"/>
<rect x="791" y="168" width="3" height="9"/>
<rect x="796" y="166" width="1" height="1"/>
<path d="M795 167h3v20h-3z M796 168h1v18h-1z" fill-rule="evenodd"/>
<rect x="800" y="182" width="1" height="3"/>
<rect x="800" y="202" width="1" height="3"/>
<path d="M799 185h3v18h-3z M800 186h1v16h-1z" fill-rule="evenodd"/>
<rect x="804" y="198" width="1" height="2"/>
<rect x="804" y="206" width="1" height="7"/>
<path d="M803 200h3v7h-3z M804 201h1v5h-1z" fill-rule="evenodd"/>
<rect x="808" y="198" width="1" height="4"/>
<rect x="808" y="204" width="1" height="5"/>
<rect x="807" y="202" width="3" height="3"/>
<rect x="812" y="199" width="1" height="1"/>
<rect x="812" y="206" width="1" height="5"/>
<path d="M811 200h3v7h-3z M812 201h1v5h-1z" fill-rule="evenodd"/>
<rect x="816" y="203" width="1" height="1"/>
<rect x="816" y="210" width="1" height="3"/>
<rect x="815" y="204" width="3" height="7"/>
<rect x="820" y="203" width="1" height="1"/>
<rect x="820" y="214" width="1" height="2"/>
<path d="M819 204h3v11h-3z M820 205h1v9h-1z" fill-rule="evenodd"/>
<rect x="824" y="201" width="1" height="10"/>
<rect x="824" y="213" width="1" height="2"/>
<rect x="823" y="211" width="3" height="3"/>
<rect x="829" y="206" width="1" height="2"/>
<rect x="829" y="210" width="1" height="3"/>
<rect x="828" y="208" width="3" height="3"/>
<rect x="833" y="204" width="1" height="6"/>
<rect x="833" y="212" width="1" height="2"/>
<rect x="832" y="210" width="3" height="3"/>
<rect x="837" y="209" width="1" height="1"/>
<rect x="837" y="211" width="1" height="3"/>
<rect x="836" y="210" width="3" height="2"/>
<rect x="841" y="207" width="1" height="3"/>
<rect x="841" y="211" width="1" height="3"/>
<rect x="840" y="210" width="3" height="2"/>
<rect x="845" y="204" width="1" height="6"/>
<rect x="845" y="211" width="1" height="3"/>
<rect x="844" y="210" width="3" height="2"/>
<rect x="849" y="199" width="1" height="11"/>
<rect x="849" y="211" width="1" height="3"/>
<rect x="848" y="210" width="3" height="2"/>
<rect x="853" y="207" width="1" height="3"/>
<rect x="853" y="214" width="1" height="5"/>
<path d="M852 210h3v5h-3z M853 211h1v3h-1z" fill-rule="evenodd"/>
<rect x="857" y="210" width="1" height="2"/>
<rect x="857" y="213" width="1" height="5"/>
<rect x="856" y="212" width="3" height="2"/>
<rect x="861" y="214" width="1" height="4"/>
<rect x="860" y="212" width="3" height="3"/>
<rect x="865" y="212" width="1" height="1"/>
<rect x="865" y="214" width="1" height="5"/>
<rect x="864" y="213" width="3" height="2"/>
</g>
<rect x="20" y="38" width="276" height="13" fill="#3b424b"/>
<polyline points="50,37 66,37.5 66,38.8 82,39 82,40.5 102,41 102,42 120,43 128,44.7 138,46.5 150,48.5 157,49.9 165,51.2 180,52.5 192,54.7 203,56.9 210,59 218,61.2 235,62.5 250,63.5 270,64.7 285,66.5 300,66.9 312,67 325,66 340,65.2 355,64.7 368,64.7 378,66 388,68.4 400,69 408,70.8 415,72.6 421.7,75 429,77.3 438,80 444.8,82.8 452,85.1 456.9,87.4 465,91.1 472.6,94.9 480,98.6 488,103 497.4,110 514,115.6 523.3,119.3 540,126.7 553,133.5 566.9,141 577,145.6 590,152 604.8,160 614,163.1 621.7,164.5 645,164.8 652,166.5 660,168.5 671,169.8 676.7,173 682.4,175.7 693.5,180.3 703,183.1 712,185 725,186.8 736,187.2 745,188.7 770,188.6 786,187.5 794,186.5 800,187.5 810,188.6 820,190.6 830,192.3 840,194.5 852,195 864,197" fill="none" stroke="#bc2626" stroke-width="1.5"/>
<polyline points="112,49.8 115.2,50.3 127.4,51.6 138.6,56.4 149,59 163.8,60.3 181.2,61.6 192.5,66 200,69.5 207,72.9 217.4,73.8 226,72.9 248.6,72.9 252,73.8 256.4,72 262,71.2 278,71.5 282.5,72.9 295,74.7 310,74.5 314,73 321,68.6 329,66.9 333.4,64.7 342,62.6 359.4,62.6 363.8,66 372.5,67.8 380,69.9 389.3,72.6 401.3,72.6 406,75 410.6,77.3 417,81.9 424.4,86.5 431.9,90.2 437.4,93.9 444.8,98.6 454,105 461.3,110 468.7,116.5 477,121.1 486.3,128.5 495.6,135.9 503,140 510.4,143.3 518,146.5 525.2,149.3 532.6,153.9 541.9,158.5 556.7,165.9 565,171 571.5,175 579,177.5 589,185.7 598.9,192.4 606.3,195.1 615.6,195 621.1,192.8 630.4,188.1 639.6,185.4 647,184.9 656.3,184.9 661.9,186.6 667.4,186.8 672,189 680,194.4 687.5,199 694.4,202.6 701.9,204.4 714.8,204.4 723,203.9 737,202.6 742,202 750,198.5 758.5,199.4 763,195 775,194.8 782.6,193 790,190.6 796.5,188.8 801,190.2 806.7,193 815,194.9 821.3,197.2 827.8,199.1 835,200.5 842.6,202.8 850,202.8 856,204.6 864,207" fill="none" stroke="#1a1ab8" stroke-width="1.3"/>
<text x="50" y="49" font-size="11" fill="#1818d8" textLength="105" lengthAdjust="spacingAndGlyphs">ential_Moving_Average</text>
<text x="159.5" y="49" font-size="11" fill="#d42020" textLength="133.5" lengthAdjust="spacingAndGlyphs">Exponential_Moving_Average</text>
</g>
<g clip-path="url(#cmacd)">
<g fill="#b82424" fill-opacity="0.85" shape-rendering="crispEdges">
<rect x="25" y="273" width="2" height="1"/>
<rect x="29" y="273" width="2" height="1"/>
<rect x="33" y="273" width="2" height="2"/>
<rect x="38" y="273" width="2" height="2"/>
<rect x="42" y="273" width="2" height="2"/>
<rect x="46" y="273" width="2" height="2"/>
<rect x="50" y="273" width="2" height="2"/>
<rect x="54" y="273" width="2" height="2"/>
<rect x="58" y="273" width="2" height="2"/>
<rect x="62" y="273" width="2" height="2"/>
<rect x="66" y="273" width="2" height="2"/>
<rect x="70" y="273" width="2" height="2"/>
<rect x="74" y="273" width="2" height="3"/>
<rect x="79" y="273" width="2" height="4"/>
<rect x="83" y="273" width="2" height="4"/>
<rect x="87" y="273" width="2" height="4"/>
<rect x="91" y="273" width="2" height="3"/>
<rect x="95" y="273" width="2" height="2"/>
<rect x="103" y="271" width="2" height="1"/>
<rect x="107" y="271" width="2" height="1"/>
<rect x="111" y="271" width="2" height="1"/>
<rect x="115" y="270" width="2" height="2"/>
<rect x="119" y="273" width="2" height="1"/>
<rect x="128" y="273" width="2" height="2"/>
<rect x="132" y="273" width="2" height="3"/>
<rect x="136" y="273" width="2" height="5"/>
<rect x="140" y="273" width="2" height="5"/>
<rect x="144" y="273" width="2" height="3"/>
<rect x="148" y="273" width="2" height="3"/>
<rect x="152" y="273" width="2" height="2"/>
<rect x="156" y="273" width="2" height="1"/>
<rect x="164" y="271" width="2" height="1"/>
<rect x="169" y="270" width="2" height="2"/>
<rect x="173" y="270" width="2" height="2"/>
<rect x="177" y="270" width="2" height="2"/>
<rect x="181" y="270" width="2" height="2"/>
<rect x="185" y="271" width="2" height="1"/>
<rect x="189" y="273" width="2" height="1"/>
<rect x="193" y="273" width="2" height="3"/>
<rect x="197" y="273" width="2" height="3"/>
<rect x="201" y="273" width="2" height="4"/>
<rect x="205" y="273" width="2" height="4"/>
<rect x="209" y="273" width="2" height="2"/>
<rect x="218" y="271" width="2" height="1"/>
<rect x="222" y="268" width="2" height="4"/>
<rect x="226" y="268" width="2" height="4"/>
<rect x="230" y="268" width="2" height="4"/>
<rect x="234" y="268" width="2" height="4"/>
<rect x="238" y="267" width="2" height="5"/>
<rect x="242" y="267" width="2" height="5"/>
<rect x="246" y="267" width="2" height="5"/>
<rect x="250" y="266" width="2" height="6"/>
<rect x="255" y="266" width="2" height="6"/>
<rect x="259" y="268" width="2" height="4"/>
<rect x="263" y="268" width="2" height="4"/>
<rect x="267" y="270" width="2" height="2"/>
<rect x="271" y="269" width="2" height="3"/>
<rect x="275" y="269" width="2" height="3"/>
<rect x="283" y="273" width="2" height="1"/>
<rect x="300" y="271" width="2" height="1"/>
<rect x="304" y="271" width="2" height="1"/>
<rect x="308" y="270" width="2" height="2"/>
<rect x="312" y="269" width="2" height="3"/>
<rect x="316" y="268" width="2" height="4"/>
<rect x="320" y="267" width="2" height="5"/>
<rect x="324" y="268" width="2" height="4"/>
<rect x="328" y="267" width="2" height="5"/>
<rect x="332" y="267" width="2" height="5"/>
<rect x="336" y="267" width="2" height="5"/>
<rect x="340" y="268" width="2" height="4"/>
<rect x="345" y="269" width="2" height="3"/>
<rect x="349" y="270" width="2" height="2"/>
<rect x="353" y="271" width="2" height="1"/>
<rect x="361" y="273" width="2" height="3"/>
<rect x="365" y="273" width="2" height="6"/>
<rect x="369" y="273" width="2" height="7"/>
<rect x="373" y="273" width="2" height="7"/>
<rect x="377" y="273" width="2" height="7"/>
<rect x="381" y="273" width="2" height="6"/>
<rect x="386" y="273" width="2" height="5"/>
<rect x="390" y="273" width="2" height="4"/>
<rect x="394" y="273" width="2" height="3"/>
<rect x="398" y="273" width="2" height="3"/>
<rect x="402" y="273" width="2" height="3"/>
<rect x="406" y="273" width="2" height="3"/>
<rect x="410" y="273" width="2" height="5"/>
<rect x="414" y="273" width="2" height="6"/>
<rect x="418" y="273" width="2" height="7"/>
<rect x="422" y="273" width="2" height="8"/>
<rect x="426" y="273" width="2" height="7"/>
<rect x="431" y="273" width="2" height="7"/>
<rect x="435" y="273" width="2" height="7"/>
<rect x="439" y="273" width="2" height="7"/>
<rect x="443" y="273" width="2" height="6"/>
<rect x="447" y="273" width="2" height="6"/>
<rect x="451" y="273" width="2" height="5"/>
<rect x="455" y="273" width="2" height="5"/>
<rect x="459" y="273" width="2" height="5"/>
<rect x="463" y="273" width="2" height="6"/>
<rect x="467" y="273" width="2" height="6"/>
<rect x="471" y="273" width="2" height="4"/>
<rect x="476" y="273" width="2" height="2"/>
<rect x="480" y="273" width="2" height="2"/>
<rect x="484" y="273" width="2" height="3"/>
<rect x="488" y="273" width="2" height="3"/>
<rect x="492" y="273" width="2" height="4"/>
<rect x="496" y="273" width="2" height="4"/>
<rect x="500" y="273" width="2" height="3"/>
<rect x="504" y="273" width="2" height="1"/>
<rect x="512" y="270" width="2" height="2"/>
<rect x="516" y="270" width="2" height="2"/>
<rect x="521" y="271" width="2" height="1"/>
<rect x="525" y="270" width="2" height="2"/>
<rect x="529" y="270" width="2" height="2"/>
<rect x="533" y="270" width="2" height="2"/>
<rect x="537" y="270" width="2" height="2"/>
<rect x="541" y="269" width="2" height="3"/>
<rect x="545" y="270" width="2" height="2"/>
<rect x="549" y="270" width="2" height="2"/>
<rect x="553" y="270" width="2" height="2"/>
<rect x="557" y="270" width="2" height="2"/>
<rect x="562" y="271" width="2" height="1"/>
<rect x="566" y="273" width="2" height="1"/>
<rect x="570" y="273" width="2" height="1"/>
<rect x="586" y="273" width="2" height="1"/>
<rect x="590" y="273" width="2" height="2"/>
<rect x="594" y="273" width="2" height="4"/>
<rect x="598" y="273" width="2" height="3"/>
<rect x="602" y="273" width="2" height="1"/>
<rect x="607" y="270" width="2" height="2"/>
<rect x="611" y="266" width="2" height="6"/>
<rect x="615" y="264" width="2" height="8"/>
<rect x="619" y="262" width="2" height="10"/>
<rect x="623" y="260" width="2" height="12"/>
<rect x="627" y="258" width="2" height="14"/>
<rect x="631" y="256" width="2" height="16"/>
<rect x="635" y="257" width="2" height="15"/>
<rect x="639" y="259" width="2" height="13"/>
<rect x="643" y="261" width="2" height="11"/>
<rect x="647" y="263" width="2" height="9"/>
<rect x="652" y="266" width="2" height="6"/>
<rect x="656" y="268" width="2" height="4"/>
<rect x="660" y="270" width="2" height="2"/>
<rect x="668" y="273" width="2" height="3"/>
<rect x="672" y="273" width="2" height="6"/>
<rect x="676" y="273" width="2" height="8"/>
<rect x="680" y="273" width="2" height="9"/>
<rect x="684" y="273" width="2" height="8"/>
<rect x="688" y="273" width="2" height="7"/>
<rect x="692" y="273" width="2" height="7"/>
<rect x="697" y="273" width="2" height="5"/>
<rect x="701" y="273" width="2" height="2"/>
<rect x="709" y="271" width="2" height="1"/>
<rect x="713" y="270" width="2" height="2"/>
<rect x="717" y="269" width="2" height="3"/>
<rect x="721" y="267" width="2" height="5"/>
<rect x="725" y="266" width="2" height="6"/>
<rect x="729" y="266" width="2" height="6"/>
<rect x="733" y="266" width="2" height="6"/>
<rect x="738" y="266" width="2" height="6"/>
<rect x="742" y="267" width="2" height="5"/>
<rect x="746" y="267" width="2" height="5"/>
<rect x="750" y="267" width="2" height="5"/>
<rect x="754" y="266" width="2" height="6"/>
<rect x="758" y="266" width="2" height="6"/>
<rect x="762" y="266" width="2" height="6"/>
<rect x="766" y="267" width="2" height="5"/>
<rect x="770" y="269" width="2" height="3"/>
<rect x="774" y="270" width="2" height="2"/>
<rect x="778" y="270" width="2" height="2"/>
<rect x="783" y="269" width="2" height="3"/>
<rect x="787" y="269" width="2" height="3"/>
<rect x="791" y="268" width="2" height="4"/>
<rect x="795" y="269" width="2" height="3"/>
<rect x="799" y="271" width="2" height="1"/>
<rect x="803" y="273" width="2" height="2"/>
<rect x="807" y="273" width="2" height="3"/>
<rect x="811" y="273" width="2" height="3"/>
<rect x="815" y="273" width="2" height="4"/>
<rect x="819" y="273" width="2" height="6"/>
<rect x="823" y="273" width="2" height="8"/>
<rect x="828" y="273" width="2" height="8"/>
<rect x="832" y="273" width="2" height="7"/>
<rect x="836" y="273" width="2" height="6"/>
<rect x="840" y="273" width="2" height="4"/>
<rect x="844" y="273" width="2" height="2"/>
<rect x="848" y="273" width="2" height="2"/>
<rect x="852" y="273" width="2" height="3"/>
<rect x="856" y="273" width="2" height="2"/>
<rect x="860" y="273" width="2" height="1"/>
</g>
<polyline points="18,271 24.5,271 37.5,270.3 54.5,270.3 65,273.5 75.3,277.4 83,281.3 98.7,281.3 101.3,280 114,280 118,278.7 126,281.3 132.6,284 140.4,288.5 148.2,288.5 154.7,287.2 162,285 170.4,283.3 186,283.3 191,286.6 201.7,290.5 212,290.5 218.6,287.9 225,282.6 238,279.4 248.5,276.1 259,274.2 270.7,274.2 277,273.5 282.4,274.8 290,276.8 300,276.8 310.4,274.8 320.8,267 332.6,262.5 341.7,262.1 352.1,262.9 358.6,265.7 365.1,272.2 372.9,276.8 378.1,279.4 388.5,280.7 401.6,281.3 408.1,283.3 414.6,289.2 422.4,294.4 430.2,297 440,301.2 446.9,303.3 456.7,305.4 467.8,310.3 474.7,308.9 481.7,308.9 490,312.3 498.3,315.8 506.7,314.4 517.8,309.6 526.1,306.8 540,306.8 545.6,304.7 559.4,304.7 567.8,308.2 578.9,306.8 590,308 596.1,312.6 602.2,311 608.3,305.9 614.4,296.8 620.5,291.7 626.7,283.5 632.8,275.4 638.9,272.3 643,270.3 647,270.8 651.1,271.3 656.2,272.3 661.3,274.4 667.4,278.4 673.5,284.5 679.6,289.6 685.7,292.7 691.8,294.5 696,294.5 699.4,293.8 705.6,290.7 715,287.6 727.5,279.8 736.9,275.9 749.4,271.2 761.9,265.7 768.1,264.9 777.5,267.3 786.9,264.9 793.1,261 799.4,263.4 805.6,268.8 815,272.8 824.4,280.6 833.8,282.9 846.3,282.9 855.6,284.5 865,282.9" fill="none" stroke="#1e8a1e" stroke-width="1.25"/>
<polyline points="20.6,270.9 37.5,268.3 57,268.3 61,270.3 70,273.5 83,276.8 89.6,276.8 93.5,278.7 104,280.7 117,280.7 120,278.5 124.8,280.7 135,280.7 140,283.3 145.6,285 195,285 199,286.6 208,286.6 209.5,288.9 222.5,288.9 225,287.2 233,284.6 240.7,284.6 246,281.3 256.4,281.3 259,278.7 264,278.7 266.8,276.8 277,276.8 279.8,274.2 285,274.2 287.6,276.8 307.8,277.4 315.6,274.8 326,269.6 339,267 345.6,265.1 358.6,265.1 367.7,267 372.9,269.6 378.1,272.2 391.1,276.8 401.6,278.7 410.7,280.7 419.8,285.3 430.2,289.2 440.6,294 446.9,297.1 458,300.5 467.8,304 478.9,306.8 488.6,308.2 498.3,311 502.5,313 513.6,313 523.3,308.9 542.8,308.9 545.6,306.8 592.8,306.8 596,308.5 608.3,308.5 614.4,304.9 620.5,301.9 626.7,297.8 632.8,292.7 638.9,286.6 645,282.5 651.1,279 655.2,276.9 671.5,276.9 676.6,279.5 683.7,282.5 690,286.5 699.4,289.2 704.1,290.7 711.9,290.7 715,289.2 721.3,288.4 730.6,284.5 736.9,282.1 746.3,277.4 755.6,274.3 765,271.2 771.3,268.8 783.8,268.8 790,266.5 796.3,264.9 802.5,265.7 811.9,268.1 821.3,271.2 830.6,274.3 840,278.2 846.3,280.6 855.6,281.3 865,282.9" fill="none" stroke="#d02626" stroke-width="1.4"/>
</g>
<rect x="20" y="255" width="31" height="12" fill="#3b424b"/>
<text x="21.5" y="266" font-size="11.5" fill="#2a8a2a" textLength="28" lengthAdjust="spacingAndGlyphs">MACD</text>
<g clip-path="url(#crsi)">
<rect x="37" y="328" width="828" height="2" fill="#1c1c98"/>
<rect x="20" y="380" width="845" height="2" fill="#1c1c98"/>
<polygon points="18,338 21.9,341.9 25.8,340.6 33.6,340.6 37.5,344.5 42.7,360.8 49.3,359.5 51.9,358.9 59.7,362.8 63.6,356.3 68.8,365.4 77.9,364.7 83.1,375.1 92.2,358.9 96.1,361.5 100,359.5 103.9,359.5 109.1,356.3 111.8,356.9 117,363.4 120.9,360.2 128.7,370.6 132.6,373.2 137.1,379.7 141.7,369.9 146.9,366.7 150.8,368 157.3,354.3 162.5,362.8 165.2,364.7 173,358.2 178.2,360.2 183.4,363.4 187.3,364.7 190.6,376.4 195.2,372.5 199.1,372.5 202.3,377.7 206.9,368 210.8,371.2 214.7,359.5 219.9,358.9 226.4,353 232.9,352.3 239.4,357.6 243.3,351.7 247.2,358.2 251.8,360.2 256.4,351 259.6,347.8 263.5,358.9 272,350.4 275.9,351 281.1,361.5 285,361.5 288.9,366 292.8,358.2 299.3,355.6 304.6,364.1 307.8,351 313,341.3 316.9,342.6 320.8,339.3 326,339.1 329.9,341.3 333.2,339.3 337.1,349.1 341.7,341.3 348.2,344.5 353.4,355 357.3,359.5 362.5,369.3 370.3,363.4 374.2,367.3 378.1,364.7 382,364.1 385.9,362.8 391.1,366.7 399,362.8 404.2,366.7 406.8,367.3 410.7,383.6 414.6,382.3 422.4,384.2 427,372.5 431.5,381 436.7,384.2 444.7,384.1 449.4,386.7 455.6,383.6 460.3,391.4 465,387.5 468.1,389.8 472.8,386.7 476.7,381.3 482.2,385.9 486.9,389.1 493.1,392.2 497,396.1 500.9,381.3 505.6,371.9 510.3,375.8 516.6,376.6 521.3,369.5 525.9,374.2 529.8,379.7 533.8,378.9 540,373.4 544.7,373.4 549.4,378.9 554.1,369.5 558.8,378.1 561.9,379.7 565,378.9 569.7,378.9 575.2,371.1 580.6,375.8 585.3,378.9 588.4,382.8 596.3,387.5 599.4,382 605.6,364.1 610,356.3 614.7,352.3 620.9,353.9 628.8,337.5 632.7,345.3 637.3,349.2 641.3,347.7 649.1,356.3 653.8,357 660.8,362.5 666.3,363.3 670.9,367.2 677.2,378.1 681.9,377.3 686.6,371.1 689.7,372.7 697.5,371.1 703.8,362.5 710,364.8 719.4,351.6 726.4,353.1 730.3,345.3 734.2,353.9 739.7,352.3 749.1,339.8 755.3,348.4 763.9,342.2 767.8,349.2 772.3,352.8 775.2,361.5 779.3,348.1 783.9,343.5 787.4,341.8 791.4,337.2 794.9,344.7 800.1,360.9 803.6,362.6 808.2,360.3 812.8,362.6 816.3,361.5 820.3,367.2 825.6,364.9 830.2,364.9 833.1,365.5 839.4,363.2 846.4,363.2 849.9,364.9 853.3,367.8 858,363.2 861.4,364.9 864.9,365.5 864.9,392 18,392" fill="url(#rsif)"/>
<polyline points="18,338 21.9,341.9 25.8,340.6 33.6,340.6 37.5,344.5 42.7,360.8 49.3,359.5 51.9,358.9 59.7,362.8 63.6,356.3 68.8,365.4 77.9,364.7 83.1,375.1 92.2,358.9 96.1,361.5 100,359.5 103.9,359.5 109.1,356.3 111.8,356.9 117,363.4 120.9,360.2 128.7,370.6" fill="none" stroke="#f0902e" stroke-width="1.05" stroke-linejoin="round"/>
<polyline points="128.7,370.6 132.6,373.2 137.1,379.7" fill="none" stroke="#3ed83e" stroke-width="1.05" stroke-linejoin="round"/>
<polyline points="137.1,379.7 141.7,369.9 146.9,366.7 150.8,368 157.3,354.3 162.5,362.8 165.2,364.7 173,358.2 178.2,360.2 183.4,363.4 187.3,364.7 190.6,376.4 195.2,372.5 199.1,372.5 202.3,377.7 206.9,368 210.8,371.2 214.7,359.5 219.9,358.9 226.4,353 232.9,352.3 239.4,357.6 243.3,351.7 247.2,358.2 251.8,360.2 256.4,351 259.6,347.8 263.5,358.9 272,350.4 275.9,351 281.1,361.5 285,361.5 288.9,366 292.8,358.2 299.3,355.6 304.6,364.1 307.8,351 313,341.3 316.9,342.6 320.8,339.3 326,339.1 329.9,341.3 333.2,339.3 337.1,349.1 341.7,341.3 348.2,344.5 353.4,355 357.3,359.5 362.5,369.3 370.3,363.4 374.2,367.3 378.1,364.7 382,364.1 385.9,362.8 391.1,366.7 399,362.8 404.2,366.7 406.8,367.3" fill="none" stroke="#f0902e" stroke-width="1.05" stroke-linejoin="round"/>
<polyline points="406.8,367.3 410.7,383.6 414.6,382.3 422.4,384.2" fill="none" stroke="#3ed83e" stroke-width="1.05" stroke-linejoin="round"/>
<polyline points="422.4,384.2 427,372.5" fill="none" stroke="#f0902e" stroke-width="1.05" stroke-linejoin="round"/>
<polyline points="427,372.5 431.5,381 436.7,384.2 444.7,384.1 449.4,386.7 455.6,383.6 460.3,391.4 465,387.5 468.1,389.8 472.8,386.7 476.7,381.3 482.2,385.9 486.9,389.1 493.1,392.2 497,396.1" fill="none" stroke="#3ed83e" stroke-width="1.05" stroke-linejoin="round"/>
<polyline points="497,396.1 500.9,381.3 505.6,371.9 510.3,375.8 516.6,376.6 521.3,369.5 525.9,374.2" fill="none" stroke="#f0902e" stroke-width="1.05" stroke-linejoin="round"/>
<polyline points="525.9,374.2 529.8,379.7" fill="none" stroke="#3ed83e" stroke-width="1.05" stroke-linejoin="round"/>
<polyline points="529.8,379.7 533.8,378.9 540,373.4 544.7,373.4 549.4,378.9 554.1,369.5 558.8,378.1" fill="none" stroke="#f0902e" stroke-width="1.05" stroke-linejoin="round"/>
<polyline points="558.8,378.1 561.9,379.7" fill="none" stroke="#3ed83e" stroke-width="1.05" stroke-linejoin="round"/>
<polyline points="561.9,379.7 565,378.9 569.7,378.9 575.2,371.1 580.6,375.8 585.3,378.9" fill="none" stroke="#f0902e" stroke-width="1.05" stroke-linejoin="round"/>
<polyline points="585.3,378.9 588.4,382.8 596.3,387.5 599.4,382" fill="none" stroke="#3ed83e" stroke-width="1.05" stroke-linejoin="round"/>
<polyline points="599.4,382 605.6,364.1 610,356.3 614.7,352.3 620.9,353.9 628.8,337.5 632.7,345.3 637.3,349.2 641.3,347.7 649.1,356.3 653.8,357 660.8,362.5 666.3,363.3 670.9,367.2 677.2,378.1 681.9,377.3 686.6,371.1 689.7,372.7 697.5,371.1 703.8,362.5 710,364.8 719.4,351.6 726.4,353.1 730.3,345.3 734.2,353.9 739.7,352.3 749.1,339.8 755.3,348.4 763.9,342.2 767.8,349.2 772.3,352.8 775.2,361.5 779.3,348.1 783.9,343.5 787.4,341.8 791.4,337.2 794.9,344.7 800.1,360.9 803.6,362.6 808.2,360.3 812.8,362.6 816.3,361.5 820.3,367.2 825.6,364.9 830.2,364.9 833.1,365.5 839.4,363.2 846.4,363.2 849.9,364.9 853.3,367.8 858,363.2 861.4,364.9 864.9,365.5" fill="none" stroke="#f0902e" stroke-width="1.05" stroke-linejoin="round"/>
</g>
<rect x="20" y="326" width="17" height="12" fill="#3b424b"/>
<text x="21.8" y="337.2" font-size="11.5" fill="#e08a40" textLength="14.2" lengthAdjust="spacingAndGlyphs">RSI</text>
<g fill="none" stroke="#a8b6c6" stroke-width="1" shape-rendering="crispEdges">
<rect x="19.5" y="37.5" width="882" height="211"/>
<rect x="19.5" y="254.5" width="882" height="65"/>
<rect x="19.5" y="325.5" width="882" height="74"/>
</g>
<rect x="901" y="204" width="48" height="21" fill="#ffffff"/>
<text x="909.7" y="218.2" font-size="11" fill="#3c4450" textLength="32.5" lengthAdjust="spacingAndGlyphs">0.9093</text>
<rect x="19" y="37" width="31" height="22" fill="#f0f0f0"/><rect x="19" y="37" width="31" height="5" fill="#cfcfcf"/>
<rect x="23.5" y="45.5" width="9.5" height="9.5" rx="2" fill="url(#red3d)" stroke="#8a1010" stroke-width="0.8"/>
<rect x="36.5" y="45.5" width="9.5" height="9.5" rx="2" fill="url(#blue3d)" stroke="#105a90" stroke-width="0.8"/>
<g stroke="#a8b6c6" stroke-width="1" shape-rendering="crispEdges">
<line x1="26.5" y1="399" x2="26.5" y2="403"/>
<line x1="51.5" y1="399" x2="51.5" y2="403"/>
<line x1="75.5" y1="399" x2="75.5" y2="403"/>
<line x1="100.5" y1="399" x2="100.5" y2="403"/>
<line x1="124.5" y1="399" x2="124.5" y2="403"/>
<line x1="149.5" y1="399" x2="149.5" y2="403"/>
<line x1="173.5" y1="399" x2="173.5" y2="403"/>
<line x1="198.5" y1="399" x2="198.5" y2="403"/>
<line x1="223.5" y1="399" x2="223.5" y2="403"/>
<line x1="247.5" y1="399" x2="247.5" y2="403"/>
<line x1="272.5" y1="399" x2="272.5" y2="403"/>
<line x1="296.5" y1="399" x2="296.5" y2="403"/>
<line x1="321.5" y1="399" x2="321.5" y2="403"/>
<line x1="345.5" y1="399" x2="345.5" y2="403"/>
<line x1="370.5" y1="399" x2="370.5" y2="403"/>
<line x1="394.5" y1="399" x2="394.5" y2="403"/>
<line x1="419.5" y1="399" x2="419.5" y2="403"/>
<line x1="444.5" y1="399" x2="444.5" y2="403"/>
<line x1="468.5" y1="399" x2="468.5" y2="403"/>
<line x1="493.5" y1="399" x2="493.5" y2="403"/>
<line x1="517.5" y1="399" x2="517.5" y2="403"/>
<line x1="542.5" y1="399" x2="542.5" y2="403"/>
<line x1="566.5" y1="399" x2="566.5" y2="403"/>
<line x1="591.5" y1="399" x2="591.5" y2="403"/>
<line x1="615.5" y1="399" x2="615.5" y2="403"/>
<line x1="640.5" y1="399" x2="640.5" y2="403"/>
<line x1="665.5" y1="399" x2="665.5" y2="403"/>
<line x1="689.5" y1="399" x2="689.5" y2="403"/>
<line x1="714.5" y1="399" x2="714.5" y2="403"/>
<line x1="738.5" y1="399" x2="738.5" y2="403"/>
<line x1="763.5" y1="399" x2="763.5" y2="403"/>
<line x1="787.5" y1="399" x2="787.5" y2="403"/>
<line x1="812.5" y1="399" x2="812.5" y2="403"/>
<line x1="836.5" y1="399" x2="836.5" y2="403"/>
<line x1="861.5" y1="399" x2="861.5" y2="403"/>
<line x1="886.5" y1="399" x2="886.5" y2="403"/>
</g>
<g font-size="11" fill="#f2f2f2" stroke="#f2f2f2" stroke-width="0.25">
<text x="20.1" y="422" textLength="10.9" lengthAdjust="spacingAndGlyphs">30</text>
<text x="47.8" y="422" textLength="5.5" lengthAdjust="spacingAndGlyphs">1</text>
<text x="71.8" y="422" textLength="5.5" lengthAdjust="spacingAndGlyphs">2</text>
<text x="96.8" y="422" textLength="5.5" lengthAdjust="spacingAndGlyphs">3</text>
<text x="120.8" y="422" textLength="5.5" lengthAdjust="spacingAndGlyphs">6</text>
<text x="145.8" y="422" textLength="5.5" lengthAdjust="spacingAndGlyphs">7</text>
<text x="169.8" y="422" textLength="5.5" lengthAdjust="spacingAndGlyphs">8</text>
<text x="194.8" y="422" textLength="5.5" lengthAdjust="spacingAndGlyphs">9</text>
<text x="217.1" y="422" textLength="10.9" lengthAdjust="spacingAndGlyphs">10</text>
<text x="241.1" y="422" textLength="10.9" lengthAdjust="spacingAndGlyphs">13</text>
<text x="266.1" y="422" textLength="10.9" lengthAdjust="spacingAndGlyphs">14</text>
<text x="290.1" y="422" textLength="10.9" lengthAdjust="spacingAndGlyphs">15</text>
<text x="315.1" y="422" textLength="10.9" lengthAdjust="spacingAndGlyphs">16</text>
<text x="339.1" y="422" textLength="10.9" lengthAdjust="spacingAndGlyphs">17</text>
<text x="364.1" y="422" textLength="10.9" lengthAdjust="spacingAndGlyphs">20</text>
<text x="388.1" y="422" textLength="10.9" lengthAdjust="spacingAndGlyphs">21</text>
<text x="413.1" y="422" textLength="10.9" lengthAdjust="spacingAndGlyphs">22</text>
<text x="438.1" y="422" textLength="10.9" lengthAdjust="spacingAndGlyphs">23</text>
<text x="462.1" y="422" textLength="10.9" lengthAdjust="spacingAndGlyphs">24</text>
<text x="487.1" y="422" textLength="10.9" lengthAdjust="spacingAndGlyphs">27</text>
<text x="511.1" y="422" textLength="10.9" lengthAdjust="spacingAndGlyphs">28</text>
<text x="536" y="422" textLength="10.9" lengthAdjust="spacingAndGlyphs">29</text>
<text x="560" y="422" textLength="10.9" lengthAdjust="spacingAndGlyphs">30</text>
<text x="585" y="422" textLength="10.9" lengthAdjust="spacingAndGlyphs">31</text>
<text x="611.8" y="422" textLength="5.5" lengthAdjust="spacingAndGlyphs">3</text>
<text x="636.8" y="422" textLength="5.5" lengthAdjust="spacingAndGlyphs">4</text>
<text x="661.8" y="422" textLength="5.5" lengthAdjust="spacingAndGlyphs">5</text>
<text x="685.8" y="422" textLength="5.5" lengthAdjust="spacingAndGlyphs">6</text>
<text x="710.8" y="422" textLength="5.5" lengthAdjust="spacingAndGlyphs">7</text>
<text x="732" y="422" textLength="10.9" lengthAdjust="spacingAndGlyphs">10</text>
<text x="757" y="422" textLength="10.9" lengthAdjust="spacingAndGlyphs">11</text>
<text x="781" y="422" textLength="10.9" lengthAdjust="spacingAndGlyphs">12</text>
<text x="806" y="422" textLength="10.9" lengthAdjust="spacingAndGlyphs">13</text>
<text x="830" y="422" textLength="10.9" lengthAdjust="spacingAndGlyphs">14</text>
<text x="855" y="422" textLength="10.9" lengthAdjust="spacingAndGlyphs">17</text>
<text x="880" y="422" textLength="10.9" lengthAdjust="spacingAndGlyphs">18</text>
</g>
<path d="M19.5 376.5 H118.5 Q120.5 376.5 120.5 378.5 V393.5 Q120.5 395.5 118.5 395.5 H19.5 Z" fill="#5a6a80" stroke="#c4d6e2" stroke-width="1"/>
<path d="M615.5 376.5 H673.5 Q675.5 376.5 675.5 378.5 V393.5 Q675.5 395.5 673.5 395.5 H615.5 Z" fill="#5a6a80" stroke="#c4d6e2" stroke-width="1"/>
<g fill="#c8e4e8"><rect x="19" y="376" width="2" height="27"/><rect x="51" y="376" width="2" height="27"/><rect x="615" y="376" width="2" height="27"/></g>
<g font-size="11" fill="#eef0f2" stroke="#eef0f2" stroke-width="0.2">
<text x="27.5" y="389.8" textLength="22" lengthAdjust="spacingAndGlyphs">Июн</text>
<text x="59.5" y="389.8" textLength="54.5" lengthAdjust="spacingAndGlyphs">Июль 2020</text>
<text x="624.3" y="389.8" textLength="44" lengthAdjust="spacingAndGlyphs">Авг 2020</text>
</g>
</svg></body></html>
